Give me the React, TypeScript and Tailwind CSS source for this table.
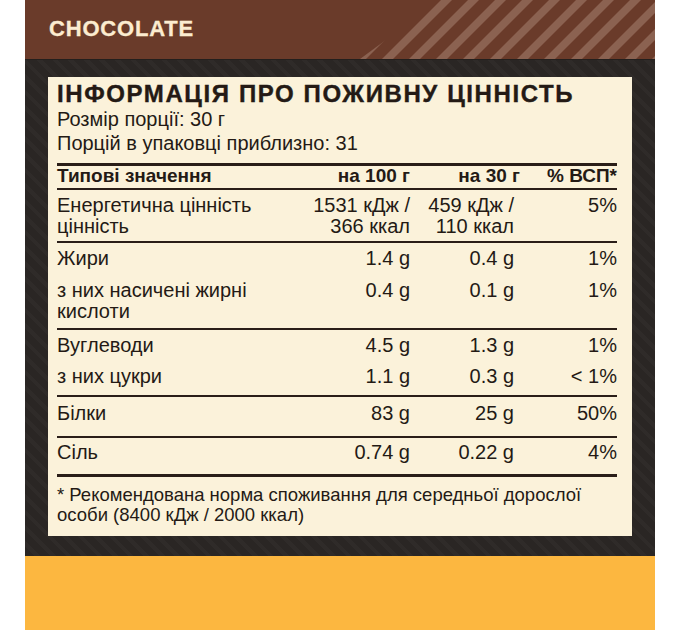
const rows = [
  { label: ['Енергетична цінність', 'цінність'], a: ['1531 кДж /', '366 ккал'], b: ['459 кДж /', '110 ккал'], c: '5%', cls: 'pt-[5px] pb-[4px] border-b-2' },
  { label: ['Жири'], a: ['1.4 g'], b: ['0.4 g'], c: '1%', cls: 'pt-[5px]' },
  { label: ['з них насичені жирні', 'кислоти'], a: ['0.4 g'], b: ['0.1 g'], c: '1%', cls: 'pt-[11px] pb-[6px] border-b-2' },
  { label: ['Вуглеводи'], a: ['4.5 g'], b: ['1.3 g'], c: '1%', cls: 'pt-[5px]' },
  { label: ['з них цукри'], a: ['1.1 g'], b: ['0.3 g'], c: '< 1%', cls: 'pt-[10px] pb-[8px] border-b-2' },
  { label: ['Білки'], a: ['83 g'], b: ['25 g'], c: '50%', cls: 'pt-[6px] pb-[12px] border-b-2' },
  { label: ['Сіль'], a: ['0.74 g'], b: ['0.22 g'], c: '4%', cls: 'pt-[4px] pb-[11px] border-b-[3px]' },
];

function Lines({ items }: { items: string[] }) {
  return (
    <>
      {items.map((t, i) => (
        <div key={i}>{t}</div>
      ))}
    </>
  );
}

function Stripes() {
  const stripes = [];
  for (let i = 0; i < 14; i++) {
    const x = 330 + i * 27;
    stripes.push(
      <polygon key={i} points={`${x},59 ${x + 11},59 ${x + 70},0 ${x + 59},0`} fill="#8b6251" />
    );
  }
  return (
    <svg className="absolute inset-0" width="630" height="59" viewBox="0 0 630 59">
      <defs>
        <clipPath id="stripeClip">
          <polygon points="335,59 415,0 630,0 630,59" />
        </clipPath>
      </defs>
      <g clipPath="url(#stripeClip)">{stripes}</g>
    </svg>
  );
}

export default function App() {
  return (
    <div className="min-h-screen bg-white flex justify-center font-['Liberation_Sans',Arial,sans-serif]">
      <div className="w-[630px] h-[630px] flex flex-col">
        {/* brown flavour band */}
        <div className="relative h-[59px] shrink-0 bg-[#6a3b2a] pl-[24px] pt-[18px]">
          <Stripes />
          <div className="relative text-[22px] leading-[22px] font-bold tracking-[0.8px] text-[#fcecd0] [-webkit-text-stroke:0.3px_#fcecd0]">
            CHOCOLATE
          </div>
        </div>

        {/* dark frame around the label */}
        <div className="shrink-0 px-[23px] pt-[17px] pb-[20px] border-t border-[#231f1d] bg-[repeating-linear-gradient(45deg,#2a2624_0px,#2a2624_7px,#2f2b29_7px,#2f2b29_11px)]">
          <div className="h-[459px] bg-[#fbf2da] pl-[9px] pr-[15px] pt-[4px] text-[#241a15]">
            <div className="text-[24px] leading-[26px] font-bold tracking-[1.6px] [-webkit-text-stroke:0.4px_#241a15]">
              ІНФОРМАЦІЯ ПРО ПОЖИВНУ ЦІННІСТЬ
            </div>
            <div className="text-[20px] leading-[24px]">
              <div>Розмір порції: 30 г</div>
              <div>Порцій в упаковці приблизно: 31</div>
            </div>

            <div className="mt-[8px] border-t-[3px] border-[#2a1e18]">
              <div className="grid grid-cols-[1fr_120px_110px_97px] pb-[2px] text-[19px] leading-[20px] font-bold border-b-2 border-[#2a1e18]">
                <div>Типові значення</div>
                <div className="text-right">на 100 г</div>
                <div className="text-right">на 30 г</div>
                <div className="text-right">% ВСП*</div>
              </div>

              {rows.map((r, i) => (
                <div
                  key={i}
                  className={`grid grid-cols-[1fr_120px_110px_97px] text-[20px] leading-[21px] border-[#2a1e18] ${r.cls}`}
                >
                  <div><Lines items={r.label} /></div>
                  <div className="text-right"><Lines items={r.a} /></div>
                  <div className="text-right pr-[6px]"><Lines items={r.b} /></div>
                  <div className="text-right">{r.c}</div>
                </div>
              ))}
            </div>

            <div className="pt-[8px] text-[18.5px] leading-[20px] whitespace-nowrap">
              <div>* Рекомендована норма споживання для середньої дорослої</div>
              <div>особи (8400 кДж / 2000 ккал)</div>
            </div>
          </div>
        </div>

        {/* orange bottom band */}
        <div className="flex-1 bg-[#fcb740]" />
      </div>
    </div>
  );
}
